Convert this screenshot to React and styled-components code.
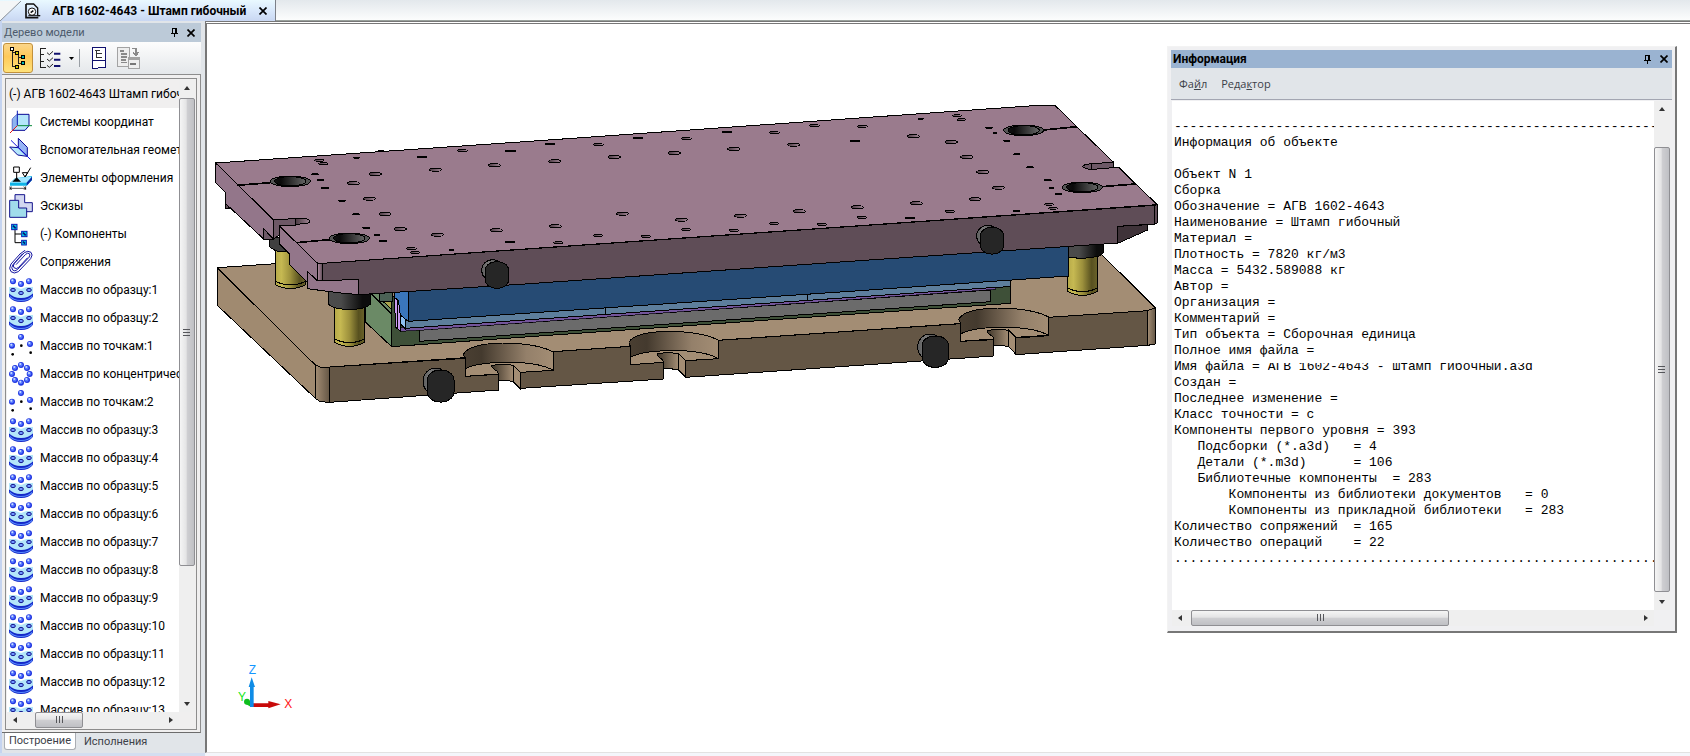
import React from "react";
import styled, { createGlobalStyle } from "styled-components";

const GlobalStyle = createGlobalStyle`
  * {
    box-sizing: border-box;
  }

  body {
    margin: 0;
    background: #fff;
    color: #000;
    font-family: "Roboto", "Open Sans", sans-serif;
    font-size: 12px;
    line-height: 16px;
  }

  button {
    margin: 0;
    padding: 0;
    border: 0;
    background: none;
    color: inherit;
    font: inherit;
  }

  svg {
    display: block;
    flex: none;
  }
`;

const Page = styled.div`
  display: flex;
  flex-direction: column;
  height: 100vh;
  overflow: hidden;
  background: #f4f6fb;
`;

const TabBar = styled.header`
  display: flex;
  flex: none;
  height: 21px;
  background: linear-gradient(#e3e8ec, #fcfdfd);
  border-bottom: 1px solid #9aa19c;
`;

const DocTab = styled.div`
  display: flex;
  align-items: center;
  height: 21px;
  padding-right: 4px;
  border-right: 1px solid #7c8088;
  background: linear-gradient(#e9f9ff, #d9e8fb 50%, #c9d7f2);
`;

const DocTitle = styled.h1`
  margin: 0 9px 0 11px;
  font-size: 12px;
  font-weight: 700;
  white-space: nowrap;
`;

const IconButton = styled.button`
  display: flex;
  align-items: center;
  justify-content: center;
  width: 16px;
  height: 16px;
`;

const Workspace = styled.div`
  display: flex;
  flex: 1;
  min-height: 0;
`;

const Sidebar = styled.aside`
  display: flex;
  flex-direction: column;
  flex: none;
  width: 205px;
  padding: 2px 4px 3px 2px;
  background: linear-gradient(90deg, #c5d4f0 0 2px, #e1e5e9 2px);
  border-bottom: 3px solid #d3def0;
`;

const PanelHeader = styled.div`
  display: flex;
  align-items: center;
  flex: none;
  height: ${(props) => (props.$strong ? 18 : 19)}px;
  padding: 0 ${(props) => (props.$strong ? 0 : 2)}px 0 2px;
  background: ${(props) => (props.$strong ? "#9ab3d1" : "#bccad8")};
`;

const PanelTitle = styled.h2`
  flex: 1;
  margin: 0;
  color: ${(props) => (props.$strong ? "#000" : "#4c5a6c")};
  font-size: ${(props) => (props.$strong ? 12 : 11)}px;
  font-weight: ${(props) => (props.$strong ? 700 : 400)};
`;

const Toolbar = styled.div`
  display: flex;
  align-items: center;
  flex: none;
  height: 33px;
  padding-left: 1px;
  background: linear-gradient(#fdfdfd, #e4e7ea);
  border-bottom: 1px solid #8d8d8d;
`;

const ToolButton = styled.button`
  display: flex;
  align-items: center;
  justify-content: center;
  width: ${(props) => props.$width || 30}px;
  height: 30px;
  border-radius: 3px;
  ${(props) =>
    props.$active &&
    `
    border: 1px solid #c2913c;
    background: linear-gradient(#fbd68a, #fec95a 45%, #ffe27a);
  `}
`;

const Divider = styled.span`
  width: 1px;
  height: 18px;
  margin: 0 9px 0 4px;
  background: #9a9fa5;
`;

const TreeArea = styled.div`
  display: flex;
  flex: 1;
  min-height: 0;
  padding: 3px 3px 2px;
  background: #f0efef;
  border-right: 1px solid #8d8d8d;
  border-bottom: 1px solid #6c6c6c;
`;

const TreeFrame = styled.div`
  display: grid;
  flex: 1;
  grid-template-columns: minmax(0, 1fr) 16px;
  grid-template-rows: minmax(0, 1fr) 16px;
  min-width: 0;
  padding: 1px;
  background: #f0efef;
  border: 1px solid #8d8d8d;
`;

const Tree = styled.ul`
  margin: 0;
  padding: 0;
  overflow: hidden;
  background: #fff;
  list-style: none;
`;

const TreeRow = styled.li`
  display: flex;
  align-items: center;
  gap: 7px;
  height: 28px;
  padding-left: 2px;
  overflow: hidden;
  background: ${(props) => (props.$root ? "#f0efef" : "#fff")};
  white-space: nowrap;
`;

const SheetTabs = styled.div`
  display: flex;
  flex: none;
  padding-left: 2px;
  font-size: 11px;
`;

const SheetTab = styled.button`
  height: 17px;
  padding: 0 4px;
  color: #3c4148;
  border-radius: 0 0 3px 3px;
  ${(props) =>
    props.$active &&
    `
    margin-right: 4px;
    background: #fff;
    border: 1px solid #a9adb3;
    border-top: 0;
  `}
`;

const Canvas = styled.main`
  position: relative;
  display: flex;
  flex: 1;
  flex-direction: column;
  justify-content: space-between;
  min-width: 0;
  margin-bottom: 3px;
  padding: 76px 0 39px;
  background: #fff;
  border-top: 3px double #777;
  border-left: 2px solid #777;
  border-bottom: 1px solid #e2e2e2;
`;

const TriadBox = styled.div`
  padding-left: 28px;
`;

/* floating tool window, lies over the model */
const InfoWindow = styled.section`
  position: absolute;
  top: 22px;
  right: 13px;
  display: flex;
  flex-direction: column;
  width: 510px;
  height: 587px;
  padding: 3px;
  background: #f0f0f2;
  border: 1px solid #f3f3f3;
  border-right: 2px solid #777;
  border-bottom: 2px solid #777;
`;

const MenuBar = styled.nav`
  display: flex;
  flex: none;
  align-items: center;
  gap: 14px;
  height: 32px;
  padding-left: 8px;
  background: #e1e5e9;
  border-bottom: 1px solid #a3a6b2;
  color: #3c4148;
  font-family: "Open Sans", sans-serif;
  font-size: 11px;
`;

const InfoBody = styled.div`
  display: grid;
  flex: 1;
  grid-template-columns: minmax(0, 1fr) 16px;
  grid-template-rows: minmax(0, 1fr) 16px;
  min-height: 0;
  margin-left: 1px;
  padding: 1px 2px 2px 0;
  background: #f0f0f2;
`;

const Report = styled.div`
  padding: 18px 0 0 2px;
  overflow: hidden;
  background: #fff;
  font-family: "Liberation Mono", monospace;
  font-size: 13px;
  line-height: 16px;
`;

const ReportLine = styled.div`
  height: 16px;
  white-space: pre;
`;

const Clipped = styled.span`
  clip-path: inset(4px 0 0 0);
`;

const Bar = styled.div`
  display: flex;
  flex-direction: ${(props) => (props.$vertical ? "column" : "row")};
  min-width: 0;
  min-height: 0;
  background: #efefef;
`;

const BarArrow = styled.button`
  display: flex;
  flex: none;
  align-items: center;
  justify-content: center;
  width: 16px;
  height: 16px;
`;

const Gap = styled.span`
  flex: ${(props) => props.$grow} 1 0;
`;

const Thumb = styled.div`
  display: flex;
  align-items: center;
  justify-content: center;
  flex: ${(props) => props.$grow} 1 0;
  background: linear-gradient(
    ${(props) => (props.$vertical ? "90deg" : "180deg")},
    #f5f5f5,
    #e4e4e5 45%,
    #cfcfd2 50%,
    #bfc0c4
  );
  border: 1px solid #8f8f93;
  border-radius: 2px;
`;

const ARROWS = {
  up: "M4 9 L7 5 L10 9 Z",
  down: "M4 5 L7 9 L10 5 Z",
  left: "M9 4 L5 7 L9 10 Z",
  right: "M5 4 L9 7 L5 10 Z",
};

const Arrow = ({ dir }) => (
  <svg width="14" height="14">
    <path d={ARROWS[dir]} fill="#333" />
  </svg>
);

const ScrollBar = ({ vertical, before, size, after }) => (
  <Bar $vertical={vertical}>
    <BarArrow aria-label={vertical ? "Вверх" : "Влево"}>
      <Arrow dir={vertical ? "up" : "left"} />
    </BarArrow>
    <Gap $grow={before} />
    <Thumb $vertical={vertical} $grow={size}>
      <svg width="8" height="8" shapeRendering="crispEdges">
        <path
          d={
            vertical
              ? "M0 1 H7 M0 4 H7 M0 7 H7"
              : "M1 0 V7 M4 0 V7 M7 0 V7"
          }
          stroke="#55565a"
        />
      </svg>
    </Thumb>
    <Gap $grow={after} />
    <BarArrow aria-label={vertical ? "Вниз" : "Вправо"}>
      <Arrow dir={vertical ? "down" : "right"} />
    </BarArrow>
  </Bar>
);

const CloseIcon = () => (
  <svg width="8" height="8" viewBox="0 0 8 8">
    <path d="M0.5 0.5 L7.5 7.5 M7.5 0.5 L0.5 7.5" stroke="#000" strokeWidth="1.7" />
  </svg>
);

const PinIcon = () => (
  <svg width="8" height="9" shapeRendering="crispEdges">
    <path d="M1 0 H6 V5 H7 V6 H4 V9 H3 V6 H0 V5 H1 Z M2 1 V5 H4 V1 Z" fillRule="evenodd" fill="#000" />
  </svg>
);

const DocIcon = () => (
  <svg width="16" height="16" viewBox="0 0 48 48" fill="none" stroke="#111" strokeWidth="4">
    <path d="M3 3 H26 L38 15 V38 H45" />
    <path d="M3 3 V44 H40" strokeWidth="5" />
    <circle cx="21" cy="26" r="11" fill="#fff" strokeWidth="3" />
    <path d="M17 29 L25 23" strokeWidth="5" />
    <path d="M10 38 H46" strokeWidth="3" />
  </svg>
);

/* small square node used by the tree-like glyphs */
const Node = ({ x, y, fill, size = 9, stroke = "#000" }) => (
  <rect x={x} y={y} width={size} height={size} fill={fill} stroke={stroke} strokeWidth="3" />
);

const TreeToolIcon = () => (
  <svg width="18" height="24" viewBox="0 0 54 72" shapeRendering="crispEdges">
    <path d="M10 12 V62 M10 20 H22 M28 26 V52 H40 M28 33 H40 M10 62 H22" stroke="#222" strokeWidth="3" fill="none" />
    <Node x={5} y={3} fill="#fff" />
    <Node x={20} y={17} fill="#d4c800" />
    <Node x={38} y={29} fill="#00b8b8" />
    <Node x={38} y={47} fill="#00b8b8" />
    <Node x={20} y={59} fill="#d4c800" />
  </svg>
);

const ListToolIcon = () => (
  <svg width="22" height="22" viewBox="0 0 66 66" fill="none" stroke="#222" strokeWidth="3">
    <path d="M20 4 H4 V62 H20 M4 22 H16 M4 42 H16" shapeRendering="crispEdges" />
    <path d="M24 17 L31 23 L42 13 M24 36 L31 42 L42 32 M24 55 L31 61 L42 51" />
    <path d="M45 20 H64 M45 38 H64 M45 57 H64" stroke="#10106e" strokeWidth="6" />
  </svg>
);

const PageToolIcon = () => (
  <svg width="14" height="22" viewBox="0 0 42 66" shapeRendering="crispEdges">
    <path d="M2 2 H39 V62 H20 L16 65 H2 Z" fill="#fff" stroke="#10106e" strokeWidth="3" />
    <path d="M2 40 H39" stroke="#10106e" strokeWidth="4" />
    <path d="M8 10 H24 M12 10 V30 H30 M12 20 H30" stroke="#333" strokeWidth="3" fill="none" />
  </svg>
);

const CopyToolIcon = () => (
  <svg width="23" height="22" viewBox="0 0 69 66" shapeRendering="crispEdges">
    <path d="M2 2 H36 V58 H2 Z" fill="#eee" stroke="#a3a3a3" strokeWidth="3" />
    <path d="M8 11 H22 M12 20 H30 M12 29 H30 M12 38 H28 M12 46 H30" stroke="#8a8a8a" strokeWidth="5" />
    <path d="M34 32 H66 V63 H34 Z" fill="#eee" stroke="#a3a3a3" strokeWidth="3" />
    <path d="M34 36 H66" stroke="#a3a3a3" strokeWidth="7" />
    <path d="M40 50 H58" stroke="#777" strokeWidth="5" />
    <path d="M46 4 H56 V20 M48 16 L56 25 L64 16" stroke="#8a8a8a" strokeWidth="5" fill="none" />
  </svg>
);

const Ball = ({ x, y }) => (
  <g>
    <circle cx={x} cy={y} r="9" fill="#2035e0" />
    <circle cx={x - 1} cy={y - 1} r="6" fill="#5577ff" />
    <circle cx={x - 2} cy={y - 3} r="3" fill="#c8dcff" />
  </g>
);

const RING = [[36, 9], [54, 18], [62, 36], [54, 54], [36, 62], [18, 54], [9, 36], [18, 18]];

const ICONS = {
  axes: (
    <g strokeWidth="3" strokeLinejoin="round">
      <path d="M25 13 H60 V47 L48 61 H10 V27 Z" fill="#b4e6fb" stroke="#0a0a96" />
      <path d="M25 13 V46 L10 61 V27 Z" fill="#8db4f0" stroke="none" />
      <path d="M25 2 V46" stroke="#0a1ab4" />
      <path d="M25 47 H69" stroke="#0a8a3c" />
      <path d="M3 69 L25 47" stroke="#e01414" />
    </g>
  ),
  planes: (
    <g stroke="#0a0a96" strokeWidth="3">
      <path d="M28 1 L55 28 V54 L28 29 Z" fill="#96b4f5" />
      <path d="M2 27 L28 29 L54 55 L26 51 Z" fill="#b4e6fb" />
      <path d="M6 7 L65 65" stroke="#1414dc" />
    </g>
  ),
  marks: (
    <g fill="none" stroke="#000" strokeWidth="3">
      <path d="M3 50 L18 37 L69 30 V42 L53 59 H3 Z" fill="#0fb4e6" stroke="none" />
      <path d="M3 50 L18 36 L69 32 L53 50 Z" fill="#a0e6ff" stroke="none" />
      <path d="M53 50 L69 32 V42 L53 59 Z" fill="#0a28a0" stroke="none" />
      <path d="M14 3 H31 V19 H14 Z" fill="#fff" />
      <path d="M23 19 V38" />
      <path d="M10 47 L23 34 L36 47 Z" fill="#000" stroke="none" />
      <path d="M40 20 H56 L48 33 Z M48 33 L65 5" />
      <path d="M3 61 V72 M50 61 V72 M3 67 H50 M9 62 L3 67 L9 71 M44 62 L50 67 L44 71" strokeWidth="2" />
    </g>
  ),
  sketch: (
    <g stroke="#14148c" strokeWidth="3">
      <path d="M18 2 H47 V26 H70 V53 H18 Z" fill="#d2d7f0" />
      <path d="M2 19 H29 V42 H53 V70 H2 Z" fill="#a0dceb" />
    </g>
  ),
  parts: (
    <g strokeWidth="3">
      <path d="M18 20 V62 H36 M18 36 H36" fill="none" stroke="#000" />
      <Node x={8} y={7} size={16} fill="#00c8e6" stroke="#0a1ab4" />
      <Node x={38} y={28} size={16} fill="#00c8e6" stroke="#0a1ab4" />
      <Node x={38} y={55} size={14} fill="#00c8e6" stroke="#0a1ab4" />
      <path d="M12 11 L20 19 M42 32 L50 40 M42 59 L48 65" stroke="#0a1478" strokeWidth="5" />
    </g>
  ),
  clip: (
    <g fill="none" strokeLinecap="round" stroke="#1414a0" strokeWidth="3">
      <path d="M33 12 L6 42 Q-2 56 6 65 Q15 73 28 65 L65 26 Q73 14 66 7 Q57 0 46 8 L16 40 Q10 49 16 54 Q22 58 29 52 L55 24" />
      <path d="M40 12 L12 44 Q5 54 11 60 Q17 66 25 59 L60 22 Q65 14 61 11 Q56 7 50 13 L22 43" />
      <path d="M33 12 L48 1" />
    </g>
  ),
  pattern: (
    <g>
      <path d="M0 46 V56 Q12 72 36 72 Q60 72 72 56 V46 Z" fill="#1428c8" />
      <path d="M2 52 Q12 66 36 66 Q60 66 70 52 L70 57 Q58 69 36 69 Q14 69 2 57 Z" fill="#5a8cff" />
      <path d="M0 27 H20 L36 33 L52 27 H72 V46 Q60 60 36 60 Q12 60 0 46 Z" fill="#b4e6fa" />
      <g fill="#6e96ff" stroke="#14148c" strokeWidth="3">
        <ellipse cx="12" cy="36" rx="7" ry="5" />
        <ellipse cx="36" cy="45" rx="7" ry="5" />
        <ellipse cx="60" cy="36" rx="7" ry="5" />
      </g>
      <Ball x={12} y={10} />
      <Ball x={36} y={18} />
      <Ball x={60} y={10} />
    </g>
  ),
  points: (
    <g>
      <Ball x={36} y={9} />
      <Ball x={9} y={35} />
      <Ball x={63} y={30} />
      <circle cx="37" cy="35" r="4" />
      <circle cx="11" cy="61" r="4" />
      <circle cx="65" cy="56" r="4" />
    </g>
  ),
  ring: (
    <g>
      {RING.map(([x, y]) => (
        <Ball key={`${x}-${y}`} x={x} y={y} />
      ))}
    </g>
  ),
};

const RowIcon = ({ name }) => (
  <svg width="24" height="24" viewBox="0 0 72 72">
    {ICONS[name]}
  </svg>
);

const treeItems = [
  ["axes", "Системы координат"],
  ["planes", "Вспомогательная геометрия"],
  ["marks", "Элементы оформления"],
  ["sketch", "Эскизы"],
  ["parts", "(-) Компоненты"],
  ["clip", "Сопряжения"],
  ["pattern", "Массив по образцу:1"],
  ["pattern", "Массив по образцу:2"],
  ["points", "Массив по точкам:1"],
  ["ring", "Массив по концентрической сетке:1"],
  ["points", "Массив по точкам:2"],
  ["pattern", "Массив по образцу:3"],
  ["pattern", "Массив по образцу:4"],
  ["pattern", "Массив по образцу:5"],
  ["pattern", "Массив по образцу:6"],
  ["pattern", "Массив по образцу:7"],
  ["pattern", "Массив по образцу:8"],
  ["pattern", "Массив по образцу:9"],
  ["pattern", "Массив по образцу:10"],
  ["pattern", "Массив по образцу:11"],
  ["pattern", "Массив по образцу:12"],
  ["pattern", "Массив по образцу:13"],
];

/* small drilled holes of the upper plate: x, y, radius */
const HOLES = [
  [343, 181, 14], [355, 191, 14], [330, 223, 10], [346, 240, 9], [360, 264, 10],
  [411, 302, 10], [454, 173, 9], [529, 154, 10], [511, 222, 18], [445, 250, 18],
  [493, 296, 18], [540, 342, 17], [453, 343, 10], [586, 387, 18], [484, 383, 11],
  [516, 405, 8], [534, 423, 10], [619, 446, 15], [630, 458, 14], [697, 404, 18],
  [740, 450, 8], [652, 171, 14], [691, 209, 18], [868, 196, 18], [916, 153, 15],
  [772, 152, 15], [874, 391, 18], [915, 426, 14],
  [1036, 132, 14], [1049, 184, 18], [1180, 134, 15], [1228, 171, 18], [1300, 114, 14],
  [1408, 159, 18], [1444, 116, 15], [1565, 96, 14], [1586, 147, 18], [1708, 98, 15],
  [1766, 134, 18], [1828, 77, 15], [1252, 341, 18], [1051, 379, 18], [1060, 428, 14],
  [1179, 407, 14], [1323, 409, 14], [1429, 359, 18], [1443, 389, 14], [1606, 347, 18],
  [1587, 391, 14], [1707, 371, 14], [1783, 334, 18], [1851, 373, 14],
  [1972, 79, 15], [1949, 123, 14], [2125, 109, 18], [2147, 56, 8], [2256, 47, 13],
  [2269, 59, 13], [2239, 126, 18], [2352, 83, 10], [2370, 99, 7], [2405, 122, 10],
  [2285, 171, 18], [2435, 163, 10], [2475, 202, 10], [2333, 216, 18], [2380, 263, 18],
  [2310, 298, 17], [2528, 241, 11], [2540, 265, 7], [2560, 282, 10], [2532, 313, 13],
  [2544, 325, 13], [2435, 333, 9], [2235, 334, 14], [2134, 310, 18], [1957, 322, 18],
  [1971, 352, 14], [2115, 354, 14],
];

const BORES = [[256, 244], [433, 415], [2456, 91], [2632, 262]];

const Notch = ({ x, y }) => (
  <g transform={`translate(${x} ${y})`}>
    <path d="M4 0 V55 L103 48 L166 43 L268 37 V-18 Q200 -46 110 -45 Q0 -36 0 -10 Z" fill="#a38d74" stroke="none" />
    <path d="M4 0 Q-2 -4 -1 -12 Q14 -42 114 -45 Q220 -44 268 -18 V37 Q220 10 112 13 Q30 16 4 33 Z" fill="url(#notch)" />
    <path d="M103 48 V96 L169 93 V43 Z" fill="#fff" stroke="none" />
    <path d="M103 48 V66 Q124 66 148 71 V22 Q110 16 83 23 Q82 30 100 40 Z" fill="url(#slot)" />
    <path d="M148 22 L169 43 V93 L148 71 Z" fill="#a38d74" />
    <path d="M268 37 L169 43 M103 96 V48 L4 55 V0" fill="none" />
  </g>
);

const Pillar = ({ x, y, height }) => (
  <g>
    <path d={`M${x} ${y} V${y + height - 12} Q${x + 45} ${y + height + 12} ${x + 91} ${y + height - 12} V${y} Z`} fill="url(#brass)" />
    <path d={`M${x} ${y + height - 22} Q${x + 45} ${y + height} ${x + 91} ${y + height - 22}`} fill="none" />
  </g>
);

/* lifting pin: grey shank with a dark cap in front */
const Pin = ({ x, y, rx, ry, shank }) => (
  <g>
    <ellipse cx={x - 10 - shank / 2} cy={y - 14} rx={rx - 2} ry={ry - 8} fill="url(#shank)" />
    <rect x={x - rx} y={y - ry} width={rx * 2} height={ry * 2} rx={rx - 3} ry={rx - 9} fill="#262626" />
  </g>
);

const Model = () => (
  <svg width="958" height="320" viewBox="6 0 2874 960" role="img" aria-label="Штамп гибочный" stroke="#000" strokeWidth="3" shapeRendering="crispEdges">
    <defs>
      <linearGradient id="brass">
        <stop offset="0" stopColor="#b5a848" />
        <stop offset="0.2" stopColor="#c6b952" />
        <stop offset="0.5" stopColor="#9c903c" />
        <stop offset="0.8" stopColor="#57501f" />
        <stop offset="1" stopColor="#6b632a" />
      </linearGradient>
      <linearGradient id="collar">
        <stop offset="0" stopColor="#4c4c4c" />
        <stop offset="0.3" stopColor="#4a4a4a" />
        <stop offset="0.8" stopColor="#0c0c0c" />
      </linearGradient>
      <linearGradient id="notch">
        <stop offset="0" stopColor="#4a3f32" />
        <stop offset="0.2" stopColor="#443a2e" />
        <stop offset="0.7" stopColor="#94806a" />
        <stop offset="1" stopColor="#a38d74" />
      </linearGradient>
      <linearGradient id="slot">
        <stop offset="0" stopColor="#3d3428" />
        <stop offset="1" stopColor="#a38d74" />
      </linearGradient>
      <linearGradient id="corner">
        <stop offset="0" stopColor="#a38d74" />
        <stop offset="1" stopColor="#645645" />
      </linearGradient>
      <linearGradient id="plateCorner">
        <stop offset="0" stopColor="#b38ea3" />
        <stop offset="1" stopColor="#5f4d57" />
      </linearGradient>
      <linearGradient id="bore">
        <stop offset="0" stopColor="#111" />
        <stop offset="0.2" stopColor="#0a0a0a" />
        <stop offset="1" stopColor="#666" />
      </linearGradient>
      <linearGradient id="shank">
        <stop offset="0" stopColor="#5c5c5c" />
        <stop offset="0.3" stopColor="#7a7a7a" />
        <stop offset="1" stopColor="#2a2a2a" />
      </linearGradient>
      <linearGradient id="drill">
        <stop offset="0" stopColor="#4a3a42" />
        <stop offset="1" stopColor="#a08494" />
      </linearGradient>
    </defs>

    {/* base plate */}
    <path d="M38 503 L2555 330 L2851 623 L2828 632 L374 801 L345 801 L331 795 L38 512 Z" fill="#a38d74" />
    <path d="M38 505 L38 617 L331 895 V795 Z" fill="#a08a70" />
    <path d="M331 795 L345 801 L374 801 V907 L345 905 L331 895 Z" fill="url(#corner)" />
    <path d="M374 801 L781 775 V829 L881 823 V870 L374 907 Z" fill="#645645" />
    <path d="M947 817 L1045 808 V755 L1277 739 V794 L1376 787 V837 L947 865 Z" fill="#645645" />
    <path d="M1442 782 L1540 776 V721 L2267 671 V724 L2366 719 V768 L1442 832 Z" fill="#645645" />
    <path d="M2432 714 L2530 707 V652 L2828 632 V736 L2432 764 Z" fill="#645645" />
    <path d="M2828 632 L2851 623 V732 L2828 736 Z" fill="url(#corner)" />
    <Notch x={777} y={774} />
    <Notch x={1273} y={739} />
    <Notch x={2263} y={669} />

    {/* lower die */}
    <path d="M480 570 H560 V740 L480 665 Z" fill="#6b8a66" />
    <path d="M558 590 H620 L2417 560 V610 L1935 643 L945 712 L643 734 L558 740 Z" fill="#3e5038" />
    <path d="M523 570 H563 V603 H523 Z" fill="#4b6155" />
    <path d="M535 605 H560 V628 Z" fill="#a8a44c" />
    <path d="M500 583 L560 643" />
    <path d="M643 690 L2357 570 V605 L643 724 Z" fill="#6b6b6b" />
    <path d="M585 683 L2372 560 V568 L643 691 L585 694 Z" fill="#74559c" strokeWidth="2" />
    <path d="M600 660 L2415 532 V560 L2372 562 L600 685 Z" fill="#5d7e9c" />
    <path d="M1202 625 V644 M1807 583 V602" />
    <path d="M568 595 L585 603 V692 L572 682 Z" fill="#c99af0" />
    <path d="M576 600 V686" />
    <path d="M587 640 L600 655 V685 L587 672 Z" fill="#8fc0f0" />

    {/* punch */}
    <path d="M568 575 H610 V664 L598 655 L586 645 L580 600 L568 592 Z" fill="#3a76bb" />
    <path d="M610 560 L2591 430 V528 L1935 574 L945 641 L610 664 Z" fill="#264b74" />

    {/* guide pillars */}
    <Pillar x={211} y={440} height={126} />
    <path d="M193 412 H290 V455 H222 Q194 446 193 436 Z" fill="#404040" />
    <Pillar x={388} y={610} height={129} />
    <path d="M370 565 V612 Q384 628 433 628 Q482 628 497 612 V565 Z" fill="url(#collar)" />
    <Pillar x={2587} y={460} height={126} />
    <path d="M2591 425 V471 Q2640 480 2682 468 L2696 458 V425 Z" fill="url(#collar)" />
    <path d="M2550 432 H2591 V528 L2550 531 Z" fill="#264b74" stroke="none" />
    <path d="M2550 531 L2591 528 V438" fill="none" />

    {/* upper plate */}
    <path d="M61 308 V325 L75 326 Z" fill="#5f4d57" />
    <path d="M32 189 V248 L61 277 V310 L176 417 H205 V359 Z" fill="#93768a" />
    <path d="M176 386 V417 H205 Z" fill="#6d5866" />
    <path d="M205 359 L272 356 V376 L223 378 V405 L205 417 Z" fill="#6d5866" />
    <path d="M223 378 V432 L253 461 V493 L307 547 V514 L338 543 V489 Z" fill="#93768a" />
    <path d="M338 490 H352 V545 L338 543 Z" fill="url(#plateCorner)" />
    <path d="M352 490 L2849 316 V372 L2738 379 V430 L2696 432 L1935 484 L945 553 L461 584 V538 L352 545 Z" fill="#5f4d57" />
    <path d="M307 514 L338 543 L461 538 V584 L398 578 L307 566 Z" fill="#93768a" />
    <path d="M2738 379 L2828 374 V390 L2738 430 Z" fill="#3f3339" />
    <path d="M2849 316 L2857 314 V368 L2849 372 Z" fill="#5f4d57" />
    <path
      d="M32 189 L960 125 L1935 56 L2500 16 H2550 L2615 80 L2725 186 V203 H2743 L2792 252 L2857 314 L1935 379 L945 448 L352 490 H338 L223 378 L272 376 V356 L205 359 Z"
      fill="#9a7b8d"
    />
    <path d="M272 356 H300 Q315 358 315 364 Q312 370 300 371 L272 373 Z" fill="url(#drill)" />
    <path d="M2660 192 L2725 186 V203 L2675 207 H2650 Q2633 204 2633 199 Q2640 191 2660 192 Z" fill="#6d5866" />
    <path d="M2660 192 V206" />
    <path d="M96 256 L196 248 M274 428 L374 419 M2516 90 L2615 80 M2690 260 L2792 252" strokeWidth="5" />

    {BORES.map(([x, y]) => (
      <g key={x}>
        <ellipse cx={x} cy={y} rx="60" ry="16" fill="#555" />
        <ellipse cx={x} cy={y} rx="47" ry="14" fill="url(#bore)" />
      </g>
    ))}
    {HOLES.map(([x, y, r]) => (
      <ellipse key={`${x}-${y}`} cx={x} cy={y} rx={r} ry={r > 16 ? 5 : r > 11 ? 3 : 2} fill="url(#drill)" />
    ))}

    <Pin x={876} y={525} rx={35} ry={40} shank={6} />
    <Pin x={707} y={858} rx={40} ry={48} shank={10} />
    <Pin x={2361} y={422} rx={35} ry={40} shank={6} />
    <Pin x={2191} y={755} rx={40} ry={47} shank={10} />
  </svg>
);

const AxisLabel = styled.text`
  font-family: "Liberation Sans", sans-serif;
  font-size: 36px;
  fill: ${(props) => props.$color};
`;

const Triad = () => (
  <svg width="60" height="48" viewBox="0 0 180 144">
    <AxisLabel x="41" y="28" $color="#1496ff">Z</AxisLabel>
    <AxisLabel x="9" y="108" $color="#14e614">Y</AxisLabel>
    <AxisLabel x="148" y="129" $color="#ff1414">X</AxisLabel>
    <circle cx="36" cy="110" r="9" fill="#0fbe1e" />
    <path d="M40 104 L50 116 L48 126 L34 118 Z" fill="#0fbe1e" />
    <path d="M50 115 H100 V108 L137 118 L100 130 V126 H50 Z" fill="#c80a0a" />
    <path d="M45 126 V66 H41 L50 37 L60 66 H56 V126 Z" fill="#0f8ce6" />
  </svg>
);

const reportHead = [
  "-".repeat(80),
  "Информация об объекте",
  "",
  "Объект N 1",
  "Сборка",
  "Обозначение = АГВ 1602-4643",
  "Наименование = Штамп гибочный",
  "Материал =",
  "Плотность = 7820 кг/м3",
  "Масса = 5432.589088 кг",
  "Автор =",
  "Организация =",
  "Комментарий =",
  "Тип объекта = Сборочная единица",
  "Полное имя файла =",
];

const reportTail = [
  "Создан =",
  "Последнее изменение =",
  "Класс точности = с",
  "Компоненты первого уровня = 393",
  "   Подсборки (*.a3d)   = 4",
  "   Детали (*.m3d)      = 106",
  "   Библиотечные компоненты  = 283",
  "       Компоненты из библиотеки документов   = 0",
  "       Компоненты из прикладной библиотеки   = 283",
  "Количество сопряжений  = 165",
  "Количество операций    = 22",
  ".".repeat(80),
];

const ModelTree = () => (
  <Sidebar>
    <PanelHeader>
      <PanelTitle>Дерево модели</PanelTitle>
      <IconButton aria-label="Закрепить"><PinIcon /></IconButton>
      <IconButton aria-label="Закрыть"><CloseIcon /></IconButton>
    </PanelHeader>
    <Toolbar>
      <ToolButton $active aria-label="Дерево"><TreeToolIcon /></ToolButton>
      <ToolButton $width={34} aria-label="Состав"><ListToolIcon /></ToolButton>
      <ToolButton $width={8} aria-label="Ещё">
        <svg width="5" height="3"><path d="M0 0 H5 L2.5 3 Z" /></svg>
      </ToolButton>
      <Divider />
      <ToolButton $width={20} aria-label="Свойства"><PageToolIcon /></ToolButton>
      <ToolButton $width={38} aria-label="Копировать"><CopyToolIcon /></ToolButton>
    </Toolbar>
    <TreeArea>
      <TreeFrame>
        <Tree>
          <TreeRow $root>(-) АГВ 1602-4643 Штамп гибочный</TreeRow>
          {treeItems.map(([icon, label]) => (
            <TreeRow key={label}>
              <RowIcon name={icon} />
              {label}
            </TreeRow>
          ))}
        </Tree>
        <ScrollBar vertical before={2} size={467} after={130} />
        <ScrollBar before={11} size={44} after={75} />
      </TreeFrame>
    </TreeArea>
    <SheetTabs>
      <SheetTab $active>Построение</SheetTab>
      <SheetTab>Исполнения</SheetTab>
    </SheetTabs>
  </Sidebar>
);

const InfoPanel = () => (
  <InfoWindow>
    <PanelHeader $strong>
      <PanelTitle $strong>Информация</PanelTitle>
      <IconButton aria-label="Закрепить"><PinIcon /></IconButton>
      <IconButton aria-label="Закрыть"><CloseIcon /></IconButton>
    </PanelHeader>
    <MenuBar>
      <button>Фа<u>й</u>л</button>
      <button>Реда<u>к</u>тор</button>
    </MenuBar>
    <InfoBody>
      <Report>
        {reportHead.map((line) => (
          <ReportLine key={line}>{line}</ReportLine>
        ))}
        <ReportLine>
          {"Имя файла = "}
          <Clipped>АГВ 1602-4643 - Штамп гибочный.a3d</Clipped>
        </ReportLine>
        {reportTail.map((line) => (
          <ReportLine key={line}>{line}</ReportLine>
        ))}
      </Report>
      <ScrollBar vertical before={30} size={444} after={2} />
      <ScrollBar before={3} size={255} after={188} />
    </InfoBody>
  </InfoWindow>
);

const App = () => (
  <>
    <GlobalStyle />
    <Page>
      <TabBar>
        <DocTab>
          <svg width="25" height="20">
            <path d="M0 0 H21 L0 20 Z" fill="#f4f6f7" />
            <path d="M21 0 L0 20" stroke="#8a9098" />
          </svg>
          <DocIcon />
          <DocTitle>АГВ 1602-4643 - Штамп гибочный</DocTitle>
          <IconButton aria-label="Закрыть документ"><CloseIcon /></IconButton>
        </DocTab>
      </TabBar>
      <Workspace>
        <ModelTree />
        <Canvas>
          <Model />
          <TriadBox>
            <Triad />
          </TriadBox>
          <InfoPanel />
        </Canvas>
      </Workspace>
    </Page>
  </>
);

export default App;
